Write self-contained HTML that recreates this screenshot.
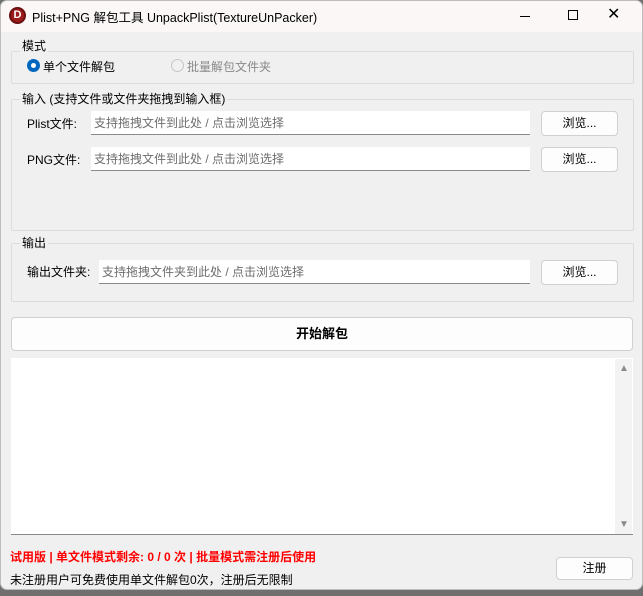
<!DOCTYPE html>
<html><head><meta charset="utf-8"><style>
*{box-sizing:border-box;margin:0;padding:0}
body{width:643px;height:596px;background:#6f6f6f;font-family:"Liberation Sans","Noto Sans CJK SC",sans-serif;font-size:12px;color:#000;position:relative;overflow:hidden}
.win{position:absolute;left:0;top:0;width:643px;height:590px;background:#f0f0f0;border:1px solid #bdbdbd;border-radius:7px;overflow:hidden}
.title{position:absolute;left:-1px;top:-1px;width:643px;height:32px;background:#fbf7f7}
.a{position:absolute;white-space:nowrap}
.grp{position:absolute;border:1px solid #dcdcdc;border-radius:2px}
.lbl{position:absolute;background:#f0f0f0;padding:0 2px;font-size:12px}
.inp{position:absolute;background:#fff;border-bottom:1px solid #8a8a8a;color:#6d6d6d;font-size:12px;padding:3px 0 0 3px;height:24px}
.btn{position:absolute;background:#fdfdfd;border:1px solid #d0d0d0;border-radius:4px;text-align:center;font-size:12px}
</style></head><body>
<div class="win">
<div class="title">
 <div class="a" style="left:9px;top:7px;width:17px;height:17px;border-radius:50%;background:#9e1b1b;border:2px solid #6b0f0f;color:#fff;font-weight:bold;font-size:11px;line-height:13px;text-align:center">D</div>
 <div class="a" style="left:32px;top:7px;font-size:12.5px">Plist+PNG 解包工具 UnpackPlist(TextureUnPacker)</div>
 <div class="a" style="left:520px;top:16px;width:10px;height:1px;background:#000"></div>
 <div class="a" style="left:568px;top:10px;width:10px;height:10px;border:1px solid #000"></div>
 <div class="a" style="left:607px;top:4px;font-size:16px;font-weight:300">✕</div>
</div>
<div class="grp" style="left:10px;top:50px;width:623px;height:33px"></div>
<div class="lbl" style="left:19px;top:36px">模式</div>
<div class="a" style="left:26px;top:58px;width:13px;height:13px;border-radius:50%;background:#0067c0"></div>
<div class="a" style="left:30px;top:62px;width:5px;height:5px;border-radius:50%;background:#fff"></div>
<div class="a" style="left:42px;top:57px">单个文件解包</div>
<div class="a" style="left:170px;top:58px;width:13px;height:13px;border-radius:50%;border:1px solid #c6c6c6"></div>
<div class="a" style="left:186px;top:57px;color:#8a8a8a">批量解包文件夹</div>

<div class="grp" style="left:10px;top:98px;width:623px;height:132px"></div>
<div class="lbl" style="left:19px;top:89px">输入 (支持文件或文件夹拖拽到输入框)</div>
<div class="a" style="left:26px;top:114px">Plist文件:</div>
<div class="inp" style="left:90px;top:110px;width:439px">支持拖拽文件到此处 / 点击浏览选择</div>
<div class="btn" style="left:540px;top:110px;width:77px;height:25px;line-height:23px">浏览...</div>
<div class="a" style="left:26px;top:150px">PNG文件:</div>
<div class="inp" style="left:90px;top:146px;width:439px">支持拖拽文件到此处 / 点击浏览选择</div>
<div class="btn" style="left:540px;top:146px;width:77px;height:25px;line-height:23px">浏览...</div>

<div class="grp" style="left:10px;top:242px;width:623px;height:59px"></div>
<div class="lbl" style="left:19px;top:233px">输出</div>
<div class="a" style="left:26px;top:262px">输出文件夹:</div>
<div class="inp" style="left:98px;top:259px;width:431px">支持拖拽文件夹到此处 / 点击浏览选择</div>
<div class="btn" style="left:540px;top:259px;width:77px;height:25px;line-height:23px">浏览...</div>

<div class="btn" style="left:10px;top:316px;width:622px;height:34px;line-height:32px;font-weight:bold;font-size:13px">开始解包</div>

<div class="a" style="left:10px;top:357px;width:622px;height:177px;background:#fff;border-bottom:1px solid #8a8a8a"></div>
<div class="a" style="left:614px;top:358px;width:17px;height:175px;background:#f3f3f3"></div>
<div class="a" style="left:618px;top:362px;font-size:10px;color:#8a8a8a">▲</div>
<div class="a" style="left:618px;top:518px;font-size:10px;color:#8a8a8a">▼</div>

<div class="a" style="left:9px;top:547px;color:#f00;font-weight:bold">试用版 | 单文件模式剩余: 0 / 0 次 | 批量模式需注册后使用</div>
<div class="a" style="left:9px;top:570px">未注册用户可免费使用单文件解包0次，注册后无限制</div>
<div class="btn" style="left:555px;top:556px;width:77px;height:23px;line-height:21px">注册</div>
</div>
</body></html>
